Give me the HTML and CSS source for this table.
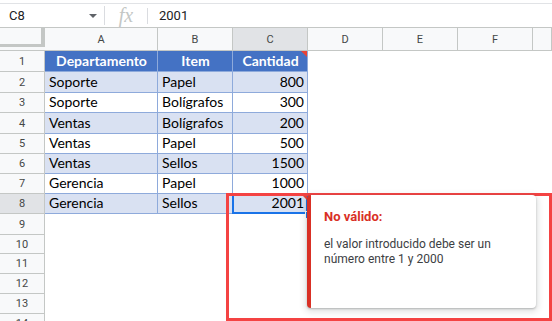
FILE: index.html
```html
<!DOCTYPE html>
<html lang="es">
<head>
<meta charset="utf-8">
<link rel="stylesheet" href="styles.css">
</head>
<body>
<div class="app">
  <div class="formula">
    <div class="namebox">
      <span class="ref">C8</span>
      <span class="caret"></span>
    </div>
    <div class="sep"></div>
    <span class="fx">fx</span>
    <div class="sep sep2"></div>
    <span class="fval">2001</span>
  </div>

  <div class="sheet">
    <div class="row colhead">
      <div class="corner"><div class="corner-bar"></div></div>
      <div class="ch">A</div>
      <div class="ch">B</div>
      <div class="ch ch-sel">C</div>
      <div class="ch">D</div>
      <div class="ch">E</div>
      <div class="ch">F</div>
      <div class="ch"></div>
    </div>

    <div class="row r21">
      <div class="rh">1</div>
      <div class="c th">Departamento</div>
      <div class="c th">Item</div>
      <div class="c th note">Cantidad</div>
      <div class="e"></div><div class="e"></div><div class="e"></div><div class="e"></div>
    </div>
    <div class="row r21">
      <div class="rh">2</div>
      <div class="c band">Soporte</div>
      <div class="c band">Papel</div>
      <div class="c band num">800</div>
      <div class="e"></div><div class="e"></div><div class="e"></div><div class="e"></div>
    </div>
    <div class="row">
      <div class="rh">3</div>
      <div class="c">Soporte</div>
      <div class="c">Bolígrafos</div>
      <div class="c num">300</div>
      <div class="e"></div><div class="e"></div><div class="e"></div><div class="e"></div>
    </div>
    <div class="row r21">
      <div class="rh">4</div>
      <div class="c band">Ventas</div>
      <div class="c band">Bolígrafos</div>
      <div class="c band num">200</div>
      <div class="e"></div><div class="e"></div><div class="e"></div><div class="e"></div>
    </div>
    <div class="row">
      <div class="rh">5</div>
      <div class="c">Ventas</div>
      <div class="c">Papel</div>
      <div class="c num">500</div>
      <div class="e"></div><div class="e"></div><div class="e"></div><div class="e"></div>
    </div>
    <div class="row">
      <div class="rh">6</div>
      <div class="c band">Ventas</div>
      <div class="c band">Sellos</div>
      <div class="c band num">1500</div>
      <div class="e"></div><div class="e"></div><div class="e"></div><div class="e"></div>
    </div>
    <div class="row">
      <div class="rh">7</div>
      <div class="c">Gerencia</div>
      <div class="c">Papel</div>
      <div class="c num">1000</div>
      <div class="e"></div><div class="e"></div><div class="e"></div><div class="e"></div>
    </div>
    <div class="row">
      <div class="rh rh-sel">8</div>
      <div class="c band">Gerencia</div>
      <div class="c band">Sellos</div>
      <div class="c band num note sel">2001</div>
      <div class="e"></div><div class="e"></div><div class="e"></div><div class="e"></div>
    </div>
    <div class="row r21">
      <div class="rh">9</div>
      <div class="e"></div><div class="e"></div><div class="e"></div><div class="e"></div><div class="e"></div><div class="e"></div><div class="e"></div>
    </div>
    <div class="row r19">
      <div class="rh">10</div>
      <div class="e"></div><div class="e"></div><div class="e"></div><div class="e"></div><div class="e"></div><div class="e"></div><div class="e"></div>
    </div>
    <div class="row">
      <div class="rh">11</div>
      <div class="e"></div><div class="e"></div><div class="e"></div><div class="e"></div><div class="e"></div><div class="e"></div><div class="e"></div>
    </div>
    <div class="row">
      <div class="rh">12</div>
      <div class="e"></div><div class="e"></div><div class="e"></div><div class="e"></div><div class="e"></div><div class="e"></div><div class="e"></div>
    </div>
    <div class="row">
      <div class="rh">13</div>
      <div class="e"></div><div class="e"></div><div class="e"></div><div class="e"></div><div class="e"></div><div class="e"></div><div class="e"></div>
    </div>
    <div class="row">
      <div class="rh">14</div>
      <div class="e"></div><div class="e"></div><div class="e"></div><div class="e"></div><div class="e"></div><div class="e"></div><div class="e"></div>
    </div>
  </div>

  <div class="highlight"></div>
  <div class="tip">
    <div class="tip-title">No válido:</div>
    <div class="tip-body">el valor introducido debe ser un número entre 1 y 2000</div>
  </div>
</div>
</body>
</html>
```

FILE: styles.css
```css
* { box-sizing: border-box; }
html, body {
  margin: 0;
  padding: 0;
  background: #ffffff;
  overflow: hidden;
}
.app {
  position: relative;
  width: 552px;
  height: 321px;
  overflow: hidden;
  font-family: Roboto, "Liberation Sans", sans-serif;
}

/* formula bar */
.formula {
  margin-top: 3px;
  height: 25px;
  border-top: 1px solid #e1e3e6;
  border-bottom: 1px solid #c4c7c5;
  display: flex;
  align-items: center;
}
.namebox {
  width: 104px;
  display: flex;
  align-items: center;
  padding-left: 9px;
  padding-right: 7px;
}
.ref {
  font-size: 13px;
  color: #202124;
  flex: 1;
}
.caret {
  width: 0;
  height: 0;
  border-left: 4px solid transparent;
  border-right: 4px solid transparent;
  border-top: 4px solid #5f6368;
}
.sep {
  width: 1px;
  height: 19px;
  background: #dadce0;
}
.sep2 { height: 16px; }
.fx {
  width: 42px;
  text-align: center;
  font-family: "Liberation Serif", serif;
  font-style: italic;
  font-size: 20px;
  color: #c4c7c5;
  line-height: 1;
  margin-top: -2px;
}
.fval {
  margin-left: 11px;
  font-size: 13px;
  color: #202124;
}

/* sheet grid */
.row {
  display: grid;
  grid-template-columns: 45px 113px 75px 75px 75px 75px 75px 1fr;
  height: 20px;
}
.r21 { height: 21px; }
.r19 { height: 19px; }

.colhead { height: 23px; }
.corner {
  background: #f8f9fa;
  border-bottom: 1px solid #c4c7c5;
}
.corner-bar {
  height: 19px;
  border-right: 4px solid #c4c7c5;
  border-bottom: 3px solid #c4c7c5;
}
.ch {
  background: #f8f9fa;
  border-right: 1px solid #c4c7c5;
  border-bottom: 1px solid #c4c7c5;
  font-size: 11px;
  color: #444746;
  display: flex;
  align-items: center;
  justify-content: center;
  padding-top: 1px;
}
.ch-sel { background: #e1e3e6; }

.rh {
  background: #f8f9fa;
  border-right: 1px solid #c4c7c5;
  border-bottom: 1px solid #c4c7c5;
  font-size: 11px;
  color: #444746;
  display: flex;
  align-items: center;
  justify-content: center;
}
.rh-sel { background: #e1e3e6; }

.c {
  position: relative;
  font-family: Lato, "Liberation Sans", sans-serif;
  font-size: 14px;
  color: #000000;
  border-right: 1px solid #8eaadb;
  border-bottom: 1px solid #8eaadb;
  display: flex;
  align-items: flex-end;
  padding: 0 3px 2px 4px;
  white-space: nowrap;
  background: #ffffff;
}
.band { background: #d9e1f2; }
.num { justify-content: flex-end; }
.th {
  background: #4472c4;
  color: #ffffff;
  font-weight: 700;
  justify-content: center;
  border-right-color: #8eaadb;
}
.e { background: #ffffff; }

.note::after {
  content: "";
  position: absolute;
  top: 0;
  right: 0;
  width: 0;
  height: 0;
  border-top: 6px solid #ea4335;
  border-left: 6px solid transparent;
}
.sel::before {
  content: "";
  position: absolute;
  top: -1px;
  left: -1px;
  right: -1px;
  bottom: -1px;
  border: 2px solid #1a73e8;
}
.sel .handle { display: none; }
.sel {
  overflow: visible;
}
.row:has(.sel) .sel {
  z-index: 1;
}

/* annotation box */
.highlight {
  position: absolute;
  left: 226px;
  top: 193px;
  width: 326px;
  height: 128px;
  border: 3px solid #f44343;
  z-index: 3;
}
.highlight::after {
  content: "";
  position: absolute;
  left: 76px;
  top: 15px;
  width: 6px;
  height: 6px;
  background: #1a73e8;
  border: 1px solid #ffffff;
}

/* tooltip */
.tip {
  position: absolute;
  left: 307px;
  top: 195px;
  width: 229px;
  height: 113px;
  background: #ffffff;
  border-left: 4px solid #d93025;
  border-radius: 4px;
  box-shadow: 0 1px 2px rgba(60, 64, 67, 0.3), 0 2px 6px 2px rgba(60, 64, 67, 0.15);
  padding: 13px 12px 0 13px;
  z-index: 4;
}
.tip-title {
  font-size: 13px;
  font-weight: 700;
  color: #d93025;
  line-height: 18px;
}
.tip-body {
  margin-top: 11px;
  font-size: 12px;
  color: #3c4043;
  line-height: 15px;
}
```
